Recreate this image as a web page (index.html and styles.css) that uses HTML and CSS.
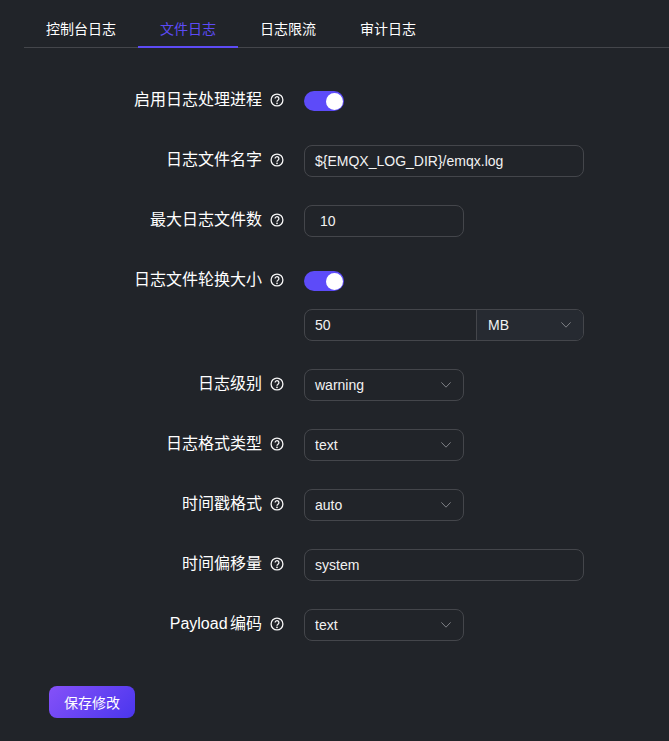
FILE: index.html
```html
<!DOCTYPE html>
<html lang="zh">
<head>
<meta charset="utf-8">
<title>文件日志</title>
<link rel="stylesheet" href="styles.css">
</head>
<body>
<svg class="defs" width="0" height="0" aria-hidden="true">
  <symbol id="help" viewBox="0 0 14 14">
    <circle cx="7" cy="7" r="5.9" fill="none" stroke="currentColor" stroke-width="1.3"/>
    <path d="M5.1 5.6a1.9 1.9 0 1 1 2.9 1.6c-.7.45-1 .75-1 1.5" fill="none" stroke="currentColor" stroke-width="1.3"/>
    <circle cx="7" cy="10.3" r=".85" fill="currentColor"/>
  </symbol>
  <symbol id="chev" viewBox="0 0 10 6">
    <path d="M.4.4 5 5.2 9.6.4" fill="none" stroke="currentColor" stroke-width="1"/>
  </symbol>
</svg>
<nav class="tabs">
  <a class="tab">控制台日志</a>
  <a class="tab active">文件日志</a>
  <a class="tab">日志限流</a>
  <a class="tab">审计日志</a>
</nav>
<form class="form">
  <div class="row">
    <label class="label">启用日志处理进程</label><svg class="help"><use href="#help"/></svg>
    <span class="switch"><i class="knob"></i></span>
  </div>
  <div class="row">
    <label class="label">日志文件名字</label><svg class="help"><use href="#help"/></svg>
    <div class="field wide">${EMQX_LOG_DIR}/emqx.log</div>
  </div>
  <div class="row">
    <label class="label">最大日志文件数</label><svg class="help"><use href="#help"/></svg>
    <div class="field narrow number">10</div>
  </div>
  <div class="row tight">
    <label class="label">日志文件轮换大小</label><svg class="help"><use href="#help"/></svg>
    <span class="switch"><i class="knob"></i></span>
  </div>
  <div class="row">
    <span class="spacer"></span>
    <div class="group">
      <div class="group-input">50</div>
      <div class="group-select">MB<svg class="chev"><use href="#chev"/></svg></div>
    </div>
  </div>
  <div class="row">
    <label class="label">日志级别</label><svg class="help"><use href="#help"/></svg>
    <div class="field narrow select">warning<svg class="chev"><use href="#chev"/></svg></div>
  </div>
  <div class="row">
    <label class="label">日志格式类型</label><svg class="help"><use href="#help"/></svg>
    <div class="field narrow select">text<svg class="chev"><use href="#chev"/></svg></div>
  </div>
  <div class="row">
    <label class="label">时间戳格式</label><svg class="help"><use href="#help"/></svg>
    <div class="field narrow select">auto<svg class="chev"><use href="#chev"/></svg></div>
  </div>
  <div class="row">
    <label class="label">时间偏移量</label><svg class="help"><use href="#help"/></svg>
    <div class="field wide">system</div>
  </div>
  <div class="row">
    <label class="label mixed">Payload 编码</label><svg class="help"><use href="#help"/></svg>
    <div class="field narrow select">text<svg class="chev"><use href="#chev"/></svg></div>
  </div>
  <button class="save" type="button">保存修改</button>
</form>
</body>
</html>
```
FILE: styles.css
```css
* { box-sizing: border-box; }
html, body { height: 100%; }
body {
  margin: 0;
  background: #212429;
  color: #fff;
  font-family: "Liberation Sans", "Noto Sans CJK SC", sans-serif;
  font-size: 14px;
  overflow: hidden;
}
.defs { position: absolute; }
.tabs {
  display: flex;
  margin-left: 24px;
  height: 48px;
  border-bottom: 1px solid #44464b;
}
.tab {
  display: block;
  height: 48px;
  padding: 0 22px;
  line-height: 58px;
  font-size: 14px;
  color: #fff;
}
.tab.active {
  color: #5d4bf5;
  border-bottom: 2px solid #5d4bf5;
}
.form { padding: 37px 0 0 0; }
.row {
  display: flex;
  align-items: center;
  height: 32px;
  margin-bottom: 28px;
}
.row.tight { margin-bottom: 12px; }
.label {
  width: 262px;
  text-align: right;
  font-size: 16px;
  line-height: 30px;
  height: 30px;
  margin-bottom: 2px;
  color: #fff;
}
.mixed { word-spacing: -2px; }
.help {
  width: 14px;
  height: 14px;
  margin: 0 20px 2px 8px;
  color: #f6f6f6;
  flex: none;
}
.spacer { width: 304px; }
.switch {
  position: relative;
  display: block;
  width: 40px;
  height: 20px;
  border-radius: 10px;
  background: #5d4bf9;
}
.knob {
  position: absolute;
  top: 1.5px;
  right: 1.5px;
  width: 17px;
  height: 17px;
  border-radius: 50%;
  background: #fff;
}
.field {
  display: flex;
  align-items: center;
  justify-content: space-between;
  height: 32px;
  padding: 0 10px;
  border: 1px solid #44464b;
  border-radius: 8px;
  font-size: 14px;
  color: #f2f2f2;
}
.wide { width: 280px; }
.narrow { width: 160px; }
.number { padding-left: 15px; }
.chev {
  width: 10px;
  height: 6px;
  color: #7f8186;
  flex: none;
}
.select { padding-right: 12px; }
.group {
  display: flex;
  width: 280px;
  height: 32px;
  border: 1px solid #44464b;
  border-radius: 8px;
  overflow: hidden;
  color: #f2f2f2;
}
.group-input {
  flex: 1;
  padding-left: 10px;
  line-height: 30px;
}
.group-select {
  display: flex;
  align-items: center;
  justify-content: space-between;
  width: 107px;
  padding: 0 12px 0 11px;
  border-left: 1px solid #44464b;
  background: #262a31;
}
.save {
  display: block;
  width: 86px;
  height: 32px;
  margin: 45px 0 0 49px;
  padding: 0;
  border: 0;
  border-radius: 8px;
  background: linear-gradient(135deg, #8551f8 0%, #4a36ee 100%);
  color: #fff;
  font: inherit;
  font-size: 14px;
}
```
